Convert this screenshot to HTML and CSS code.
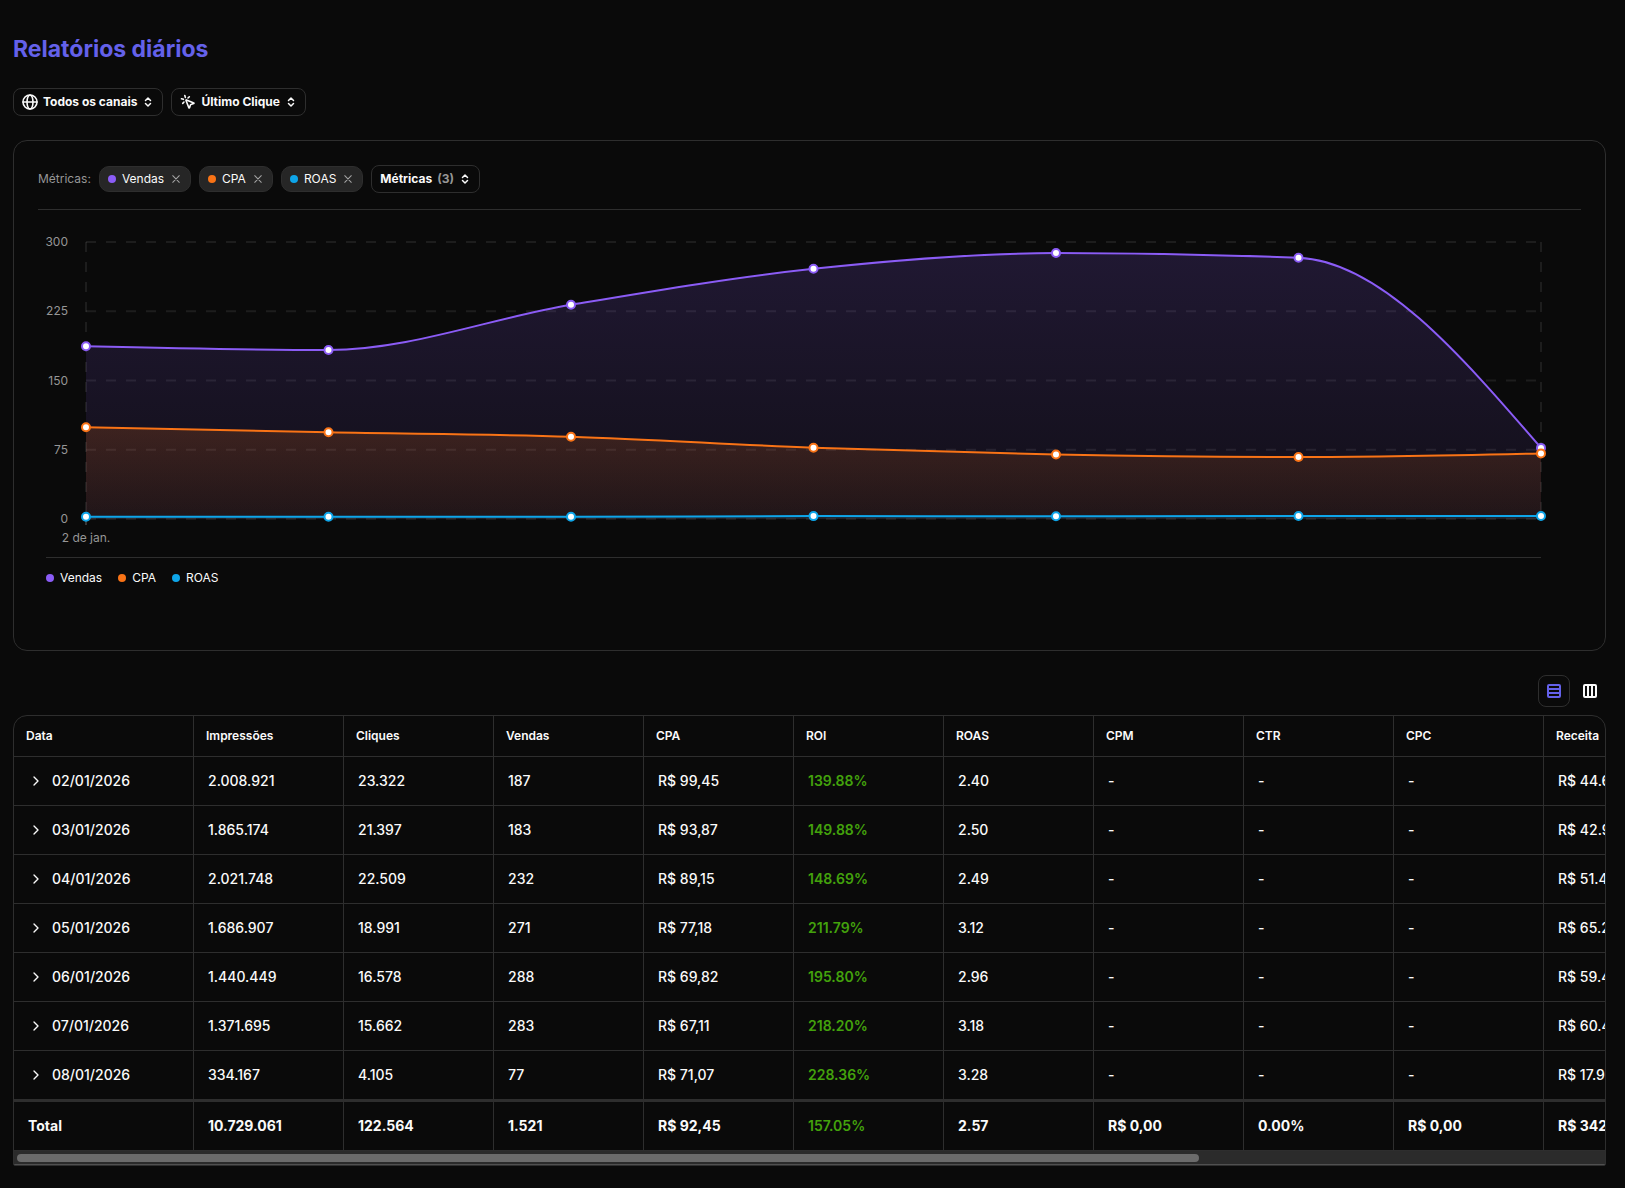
FILE: index.html
```
<!DOCTYPE html>
<html lang="pt-BR">

<head>
     <meta charset="UTF-8">
     <meta name="viewport" content="width=device-width, initial-scale=1.0">
     <title>Relatórios diários</title>
     <link rel="stylesheet" href="styles.css">
</head>

<body>
     <!-- Ícones reutilizados -->
     <svg class="sprite" aria-hidden="true">
          <symbol id="i-selector" viewBox="0 0 24 24"><path d="m7 15 5 5 5-5M7 9l5-5 5 5" /></symbol>
          <symbol id="i-close" viewBox="1 1 22 22"><path d="M18 6 6 18M6 6l12 12" /></symbol>
          <symbol id="i-chevron" viewBox="0 0 24 24"><path d="m9 18 6-6-6-6" /></symbol>
     </svg>

     <main>
          <h1>Relatórios diários</h1>

          <div class="filters">
               <button type="button" class="btn">
                    <svg class="icon" viewBox="0 0 24 24"><circle cx="12" cy="12" r="10.5" /><ellipse cx="12" cy="12" rx="4.5" ry="10.5" /><path d="M1.5 12h21" /></svg>
                    Todos os canais
                    <svg class="icon icon-selector"><use href="#i-selector" /></svg>
               </button>
               <button type="button" class="btn">
                    <svg class="icon" viewBox="0 0 24 24"><path d="M14 4.1 12 6M5.1 8l-2.9-.8M6 12l-1.9 2M7.2 2.2 8 5.1M9 9.7a.5.5 0 0 1 .7-.7l11 4.5a.5.5 0 0 1-.1.9l-4.3 1.3a1 1 0 0 0-.7.7l-1.3 4.3a.5.5 0 0 1-.9.1z" /></svg>
                    Último Clique
                    <svg class="icon icon-selector"><use href="#i-selector" /></svg>
               </button>
          </div>

          <section class="card" aria-label="Gráfico de métricas">
               <div class="metrics">
                    <span class="metrics-label">Métricas:</span>
                    <span class="chip"><i class="dot vendas"></i>Vendas<button type="button" aria-label="Remover Vendas"><svg><use href="#i-close" /></svg></button></span>
                    <span class="chip"><i class="dot cpa"></i>CPA<button type="button" aria-label="Remover CPA"><svg><use href="#i-close" /></svg></button></span>
                    <span class="chip"><i class="dot roas"></i>ROAS<button type="button" aria-label="Remover ROAS"><svg><use href="#i-close" /></svg></button></span>
                    <button type="button" class="btn">
                         Métricas <span class="count">(3)</span>
                         <svg class="icon icon-selector"><use href="#i-selector" /></svg>
                    </button>
               </div>

               <div class="chart">
                    <svg id="chart" role="img" aria-label="Vendas, CPA e ROAS por dia"></svg>
                    <ul class="legend">
                         <li><i class="dot vendas"></i>Vendas</li>
                         <li><i class="dot cpa"></i>CPA</li>
                         <li><i class="dot roas"></i>ROAS</li>
                    </ul>
               </div>
          </section>

          <div class="view-toggle">
               <button type="button" class="active" aria-label="Ver por linhas" aria-pressed="true">
                    <svg viewBox="0 0 16 16"><rect x="2" y="2" width="12" height="12" rx="1" /><path d="M2 6h12M2 10h12" /></svg>
               </button>
               <button type="button" aria-label="Ver por colunas" aria-pressed="false">
                    <svg viewBox="0 0 16 16"><rect x="2" y="2" width="12" height="12" rx="1" /><path d="M6 2v12M10 2v12" /></svg>
               </button>
          </div>

          <div class="table-box">
               <div class="table-scroll" id="table-scroll">
                    <table>
                         <thead>
                              <tr>
                                   <th scope="col">Data</th>
                                   <th scope="col">Impressões</th>
                                   <th scope="col">Cliques</th>
                                   <th scope="col">Vendas</th>
                                   <th scope="col">CPA</th>
                                   <th scope="col">ROI</th>
                                   <th scope="col">ROAS</th>
                                   <th scope="col">CPM</th>
                                   <th scope="col">CTR</th>
                                   <th scope="col">CPC</th>
                                   <th scope="col">Receita</th>
                              </tr>
                         </thead>
                         <tbody id="rows"></tbody>
                         <tfoot>
                              <tr>
                                   <td>Total</td>
                                   <td>10.729.061</td>
                                   <td>122.564</td>
                                   <td>1.521</td>
                                   <td>R$ 92,45</td>
                                   <td class="roi">157.05%</td>
                                   <td>2.57</td>
                                   <td>R$ 0,00</td>
                                   <td>0.00%</td>
                                   <td>R$ 0,00</td>
                                   <td>R$ 342.111,25</td>
                              </tr>
                         </tfoot>
                    </table>
               </div>
               <div class="scrollbar"><div class="thumb" id="thumb"></div></div>
          </div>
     </main>

     <script src="script.js"></script>
</body>

</html>
```
FILE: styles.css
```
:root {
     --BACKGROUND-color: #0a0a0a;
     --BORDER-color: #2e2e2e;
     --CHIP-color: #262626;
     --TEXT-color: #fafafa;
     --MUTED-color: #969696;
     --ACCENT-color: #6461ea;
     --VENDAS-color: #8b5cf6;
     --CPA-color: #f97316;
     --ROAS-color: #0ea5e9;
     --ROI-color: #43a20c;
}

/** Geral **/
*,
*::before,
*::after {
     box-sizing: border-box;
     margin: 0;
     padding: 0;
}

body {
     background: var(--BACKGROUND-color);
     color: var(--TEXT-color);
     font-family: Inter, sans-serif;
     font-size: 12px;
     line-height: 16px;
}

main {
     padding: 32px 19px 22px 13px;
}

h1 {
     color: var(--ACCENT-color);
     font-size: 23px;
     line-height: 34px;
     font-weight: 700;
}

button {
     background: none;
     border: 0;
     color: inherit;
     font: inherit;
     cursor: pointer;
}

svg {
     fill: none;
     stroke: currentColor;
     stroke-width: 2;
     stroke-linecap: round;
     stroke-linejoin: round;
}

.sprite {
     display: none;
}

/** Filtros **/
.filters {
     display: flex;
     gap: 8px;
     margin: 22px 0 24px;
}

.btn {
     display: flex;
     align-items: center;
     gap: 5px;
     height: 28px;
     padding: 0 8px;
     border: 1px solid var(--BORDER-color);
     border-radius: 8px;
     font-weight: 700;
}

.icon {
     width: 16px;
     height: 16px;
}

.filters .icon {
     stroke-width: 2.4;
}

.btn .icon-selector {
     width: 12px;
     height: 12px;
     stroke-width: 3;
}

.count {
     color: var(--MUTED-color);
}

/** Cartão do gráfico **/
.card {
     min-height: 511px;
     padding: 24px;
     border: 1px solid var(--BORDER-color);
     border-radius: 14px;
}

.metrics {
     display: flex;
     align-items: center;
     gap: 8px;
     padding-bottom: 16px;
     border-bottom: 1px solid var(--BORDER-color);
}

.metrics-label {
     color: var(--MUTED-color);
}

.chip {
     display: flex;
     align-items: center;
     gap: 6px;
     height: 26px;
     padding: 0 8px;
     border: 1px solid var(--BORDER-color);
     border-radius: 10px;
     background: var(--CHIP-color);
}

.chip button {
     display: flex;
     color: #a3a3a3;
}

.chip svg {
     width: 12px;
     height: 12px;
}

.dot {
     width: 8px;
     height: 8px;
     border-radius: 50%;
}

.vendas {
     background: var(--VENDAS-color);
}

.cpa {
     background: var(--CPA-color);
}

.roas {
     background: var(--ROAS-color);
}

.chart {
     padding: 16px 40px 0 8px;
}

#chart {
     display: block;
     width: 100%;
     height: 331px;
     overflow: visible;
}

#chart text {
     fill: var(--MUTED-color);
     stroke: none;
}

.grid {
     stroke: #fff;
     stroke-opacity: .08;
     stroke-dasharray: 10 10;
     stroke-linecap: butt;
}

.tick {
     stroke: #666;
     stroke-width: 1;
     stroke-linecap: butt;
}

.legend {
     display: flex;
     gap: 16px;
     padding-top: 12px;
     border-top: 1px solid var(--BORDER-color);
     list-style: none;
}

.legend li {
     display: flex;
     align-items: center;
     gap: 6px;
}

/** Tabela **/
.view-toggle {
     display: flex;
     justify-content: flex-end;
     gap: 4px;
     margin: 24px 0 8px;
}

.view-toggle button {
     display: grid;
     place-items: center;
     width: 32px;
     height: 32px;
     border: 1px solid transparent;
     border-radius: 8px;
}

.view-toggle .active {
     border-color: var(--BORDER-color);
     color: var(--ACCENT-color);
}

.view-toggle svg {
     width: 16px;
     height: 16px;
}

.table-box {
     border: 1px solid var(--BORDER-color);
     border-radius: 14px 14px 2px 2px;
     overflow: hidden;
}

.table-scroll {
     overflow-x: auto;
     scrollbar-width: none;
}

table {
     width: 2133px;
     table-layout: fixed;
     border-collapse: separate;
     border-spacing: 0;
     font-size: 14px;
     font-weight: 500;
}

th {
     width: 150px;
     height: 41px;
     padding: 0 12px;
     font-size: 12px;
     font-weight: 600;
     text-align: left;
}

th:first-child {
     width: 180px;
}

th:last-child {
     width: auto;
}

td {
     height: 49px;
     padding: 0 14px;
}

th,
td {
     border-right: 1px solid var(--BORDER-color);
     border-bottom: 1px solid var(--BORDER-color);
}

tbody tr:last-child td {
     height: 51px;
     border-bottom-width: 3px;
}

tfoot {
     font-weight: 700;
}

.roi {
     color: var(--ROI-color);
     font-weight: 600;
}

.day {
     display: flex;
     align-items: center;
     gap: 8px;
}

.day button {
     display: flex;
}

.scrollbar {
     height: 14px;
     padding: 3px;
     border-bottom: 1px solid #505050;
     background: #2b2b2b;
}

.thumb {
     height: 8px;
     border-radius: 4px;
     background: #6b6b6b;
}
```
FILE: script.js
```
const days = [
     // data, impressões, cliques, vendas, cpa, roi, roas, receita
     ['02/01/2026', '2.008.921', '23.322', 187, 99.45, '139.88%', 2.40, 'R$ 44.610,62'],
     ['03/01/2026', '1.865.174', '21.397', 183, 93.87, '149.88%', 2.50, 'R$ 42.925,10'],
     ['04/01/2026', '2.021.748', '22.509', 232, 89.15, '148.69%', 2.49, 'R$ 51.435,76'],
     ['05/01/2026', '1.686.907', '18.991', 271, 77.18, '211.79%', 3.12, 'R$ 65.213,42'],
     ['06/01/2026', '1.440.449', '16.578', 288, 69.82, '195.80%', 2.96, 'R$ 59.480,09'],
     ['07/01/2026', '1.371.695', '15.662', 283, 67.11, '218.20%', 3.18, 'R$ 60.433,27'],
     ['08/01/2026', '334.167', '4.105', 77, 71.07, '228.36%', 3.28, 'R$ 17.969,50'],
];

const series = [
     { name: 'vendas', column: 3, color: '#8b5cf6' },
     { name: 'cpa', column: 4, color: '#f97316' },
     { name: 'roas', column: 6, color: '#0ea5e9' },
];

// Linhas da tabela
document.getElementById('rows').innerHTML = days.map(d => `
     <tr>
          <td><div class="day"><button type="button" aria-label="Expandir ${d[0]}"><svg class="icon"><use href="#i-chevron" /></svg></button>${d[0]}</div></td>
          <td>${d[1]}</td>
          <td>${d[2]}</td>
          <td>${d[3]}</td>
          <td>R$ ${d[4].toFixed(2).replace('.', ',')}</td>
          <td class="roi">${d[5]}</td>
          <td>${d[6].toFixed(2)}</td>
          <td>-</td>
          <td>-</td>
          <td>-</td>
          <td>${d[7]}</td>
     </tr>`).join('');

// Curva cúbica monótona
function curve(p) {
     const n = p.length;
     const slope = i => (p[i + 1].y - p[i].y) / (p[i + 1].x - p[i].x);
     const t = p.map((_, i) => {
          if (i === 0 || i === n - 1) return 0;
          const a = slope(i - 1);
          const b = slope(i);
          return (Math.sign(a) + Math.sign(b)) * Math.min(Math.abs(a), Math.abs(b), Math.abs(a + b) / 4) || 0;
     });
     t[0] = (3 * slope(0) - t[1]) / 2;
     t[n - 1] = (3 * slope(n - 2) - t[n - 2]) / 2;

     let d = `M${p[0].x},${p[0].y}`;
     for (let i = 0; i < n - 1; i++) {
          const dx = (p[i + 1].x - p[i].x) / 3;
          d += `C${p[i].x + dx},${p[i].y + dx * t[i]} ${p[i + 1].x - dx},${p[i + 1].y - dx * t[i + 1]} ${p[i + 1].x},${p[i + 1].y}`;
     }
     return d;
}

function drawChart() {
     const svg = document.getElementById('chart');
     const left = 40;
     const right = svg.clientWidth;
     const top = 16;
     const bottom = 293;
     const y = v => bottom - v / 300 * (bottom - top);
     const x = i => left + i * (right - left) / (days.length - 1);
     let out = '';

     [0, 75, 150, 225, 300].forEach(v => {
          out += `<path class="grid" d="M${left},${y(v)}H${right}" />`;
          out += `<text x="22" y="${y(v) + 4}" text-anchor="end">${v}</text>`;
     });
     out += `<path class="grid" d="M${left},${top}V${bottom}" /><path class="grid" d="M${right},${top}V${bottom}" />`;
     out += `<path class="tick" d="M${left},${bottom}v6" />`;
     out += `<text x="${left}" y="${bottom + 23}" text-anchor="middle">2 de jan.</text>`;

     series.forEach(s => {
          const points = days.map((d, i) => ({ x: x(i), y: y(d[s.column]) }));
          const line = curve(points);
          out += `<linearGradient id="g-${s.name}" x1="0" y1="0" x2="0" y2="1">
               <stop offset="0" stop-color="${s.color}" stop-opacity=".17" />
               <stop offset="1" stop-color="${s.color}" stop-opacity=".06" />
          </linearGradient>`;
          out += `<path d="${line}V${bottom}H${left}Z" fill="url(#g-${s.name})" stroke="none" />`;
          out += `<path d="${line}" stroke="${s.color}" />`;
          s.dots = points.map(p => `<circle cx="${p.x}" cy="${p.y}" r="4" fill="#fff" stroke="${s.color}" />`).join('');
     });
     svg.innerHTML = out + series.map(s => s.dots).join('');
}

// Barra de rolagem
const scroller = document.getElementById('table-scroll');
const thumb = document.getElementById('thumb');

function updateThumb() {
     const track = thumb.parentElement.clientWidth - 6;
     const ratio = track / scroller.scrollWidth;
     thumb.style.width = `${Math.min(scroller.clientWidth * ratio, track)}px`;
     thumb.style.marginLeft = `${scroller.scrollLeft * ratio}px`;
}

function update() {
     drawChart();
     updateThumb();
}

scroller.addEventListener('scroll', updateThumb);
window.addEventListener('resize', update);
update();
```
